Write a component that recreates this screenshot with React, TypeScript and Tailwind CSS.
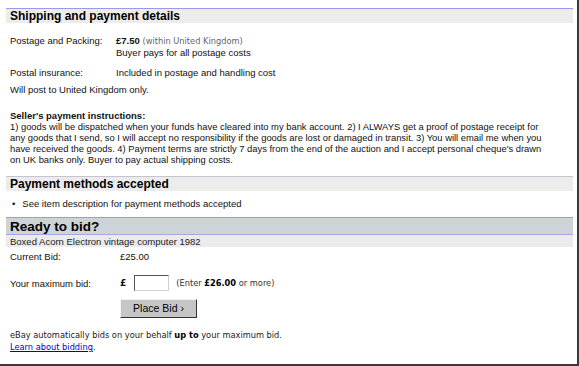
// eBay-style "Shipping and payment details" + "Ready to bid?" item panel.
const verdana = "font-['DejaVu_Sans',Verdana,sans-serif]";

function SectionHeader({ title, line = "border-[#9a9ae6]" }: { title: string; line?: string }) {
  return (
    <div className={`border-t ${line} bg-[#ececec] h-[15px] pl-[4px] text-[12px] font-bold leading-[15px] text-black`}>
      {title}
    </div>
  );
}

export default function App() {
  return (
    <div className="box-border w-[579px] h-[366px] overflow-hidden border-r-2 border-b-2 border-[#3a3a3a] bg-white pt-[8px] pl-[6px] pr-[4px] font-['Liberation_Sans',Arial,sans-serif] text-[9.5px] leading-[11px] text-[#111]">
      <SectionHeader title="Shipping and payment details" />

      <div className="pl-[4px]">
        <div className="mt-[12px] grid grid-cols-[106px_1fr]">
          <span>Postage and Packing:</span>
          <div>
            <div>
              <b>£7.50</b>{" "}
              <span className={`${verdana} text-[8.25px] text-[#666]`}>(within United Kingdom)</span>
            </div>
            <div>Buyer pays for all postage costs</div>
          </div>
        </div>

        <div className="mt-[9px] grid grid-cols-[106px_1fr]">
          <span>Postal insurance:</span>
          <span>Included in postage and handling cost</span>
        </div>

        <p className="mt-[6px]">Will post to United Kingdom only.</p>

        <p className="mt-[15px] font-bold">Seller's payment instructions:</p>
        <p className="whitespace-nowrap text-[9.4px]">
          1) goods will be dispatched when your funds have cleared into my bank account. 2) I ALWAYS get a proof of postage receipt for
          <br />
          any goods that I send, so I will accept no responsibility if the goods are lost or damaged in transit. 3) You will email me when you
          <br />
          have received the goods. 4) Payment terms are strictly 7 days from the end of the auction and I accept personal cheque's drawn
          <br />
          on UK banks only. Buyer to pay actual shipping costs.
        </p>
      </div>

      <div className="mt-[11px]">
        <SectionHeader title="Payment methods accepted" line="border-[#c4c4d2]" />
      </div>
      <ul className="mt-[7px] pl-[6px]">
        <li className="flex gap-[7px]">
          <span>•</span>
          <span>See item description for payment methods accepted</span>
        </li>
      </ul>

      <div className="mt-[8px] border-t border-[#9a9ae6] bg-[#cdd3d6] h-[17px] pl-[4px] text-[13.5px] font-bold leading-[17px] text-black">
        Ready to bid?
      </div>
      <div className="border-t border-[#a6a6ec] bg-[#ebebeb] h-[13px] pl-[4px] leading-[13px] text-[#222]">
        Boxed Acorn Electron vintage computer 1982
      </div>

      <div className="pl-[4px]">
        <div className="mt-[4px] grid grid-cols-[110px_1fr]">
          <span>Current Bid:</span>
          <span>£25.00</span>
        </div>

        <div className="mt-[13px] grid grid-cols-[110px_1fr] items-center">
          <span>Your maximum bid:</span>
          <div className="flex items-center">
            <b className={`${verdana} text-[9px]`}>£</b>
            <input
              type="text"
              className="ml-[8px] h-[16px] w-[35px] border border-t-[#555] border-l-[#555] border-b-[#d0d0d0] border-r-[#d0d0d0] bg-white outline-none"
            />
            <span className={`${verdana} ml-[7px] text-[8.25px] text-[#333]`}>
              (Enter <b className="text-black">£26.00</b> or more)
            </span>
          </div>
        </div>

        <div className="mt-[8px] pl-[110px]">
          <button className="h-[19px] w-[77px] border border-t-[#f4f4f4] border-l-[#f4f4f4] border-b-[#333] border-r-[#333] bg-[#c6c6c6] text-[10.5px] leading-[17px] text-black">
            Place Bid ›
          </button>
        </div>

        <div className={`${verdana} mt-[11px] text-[8.25px] leading-[12px] text-[#222]`}>
          <p>
            eBay automatically bids on your behalf <b className="text-black">up to</b> your maximum bid.
          </p>
          <p>
            <a href="#" className="text-[#0000cc] underline">Learn about bidding</a>.
          </p>
        </div>
      </div>
    </div>
  );
}
